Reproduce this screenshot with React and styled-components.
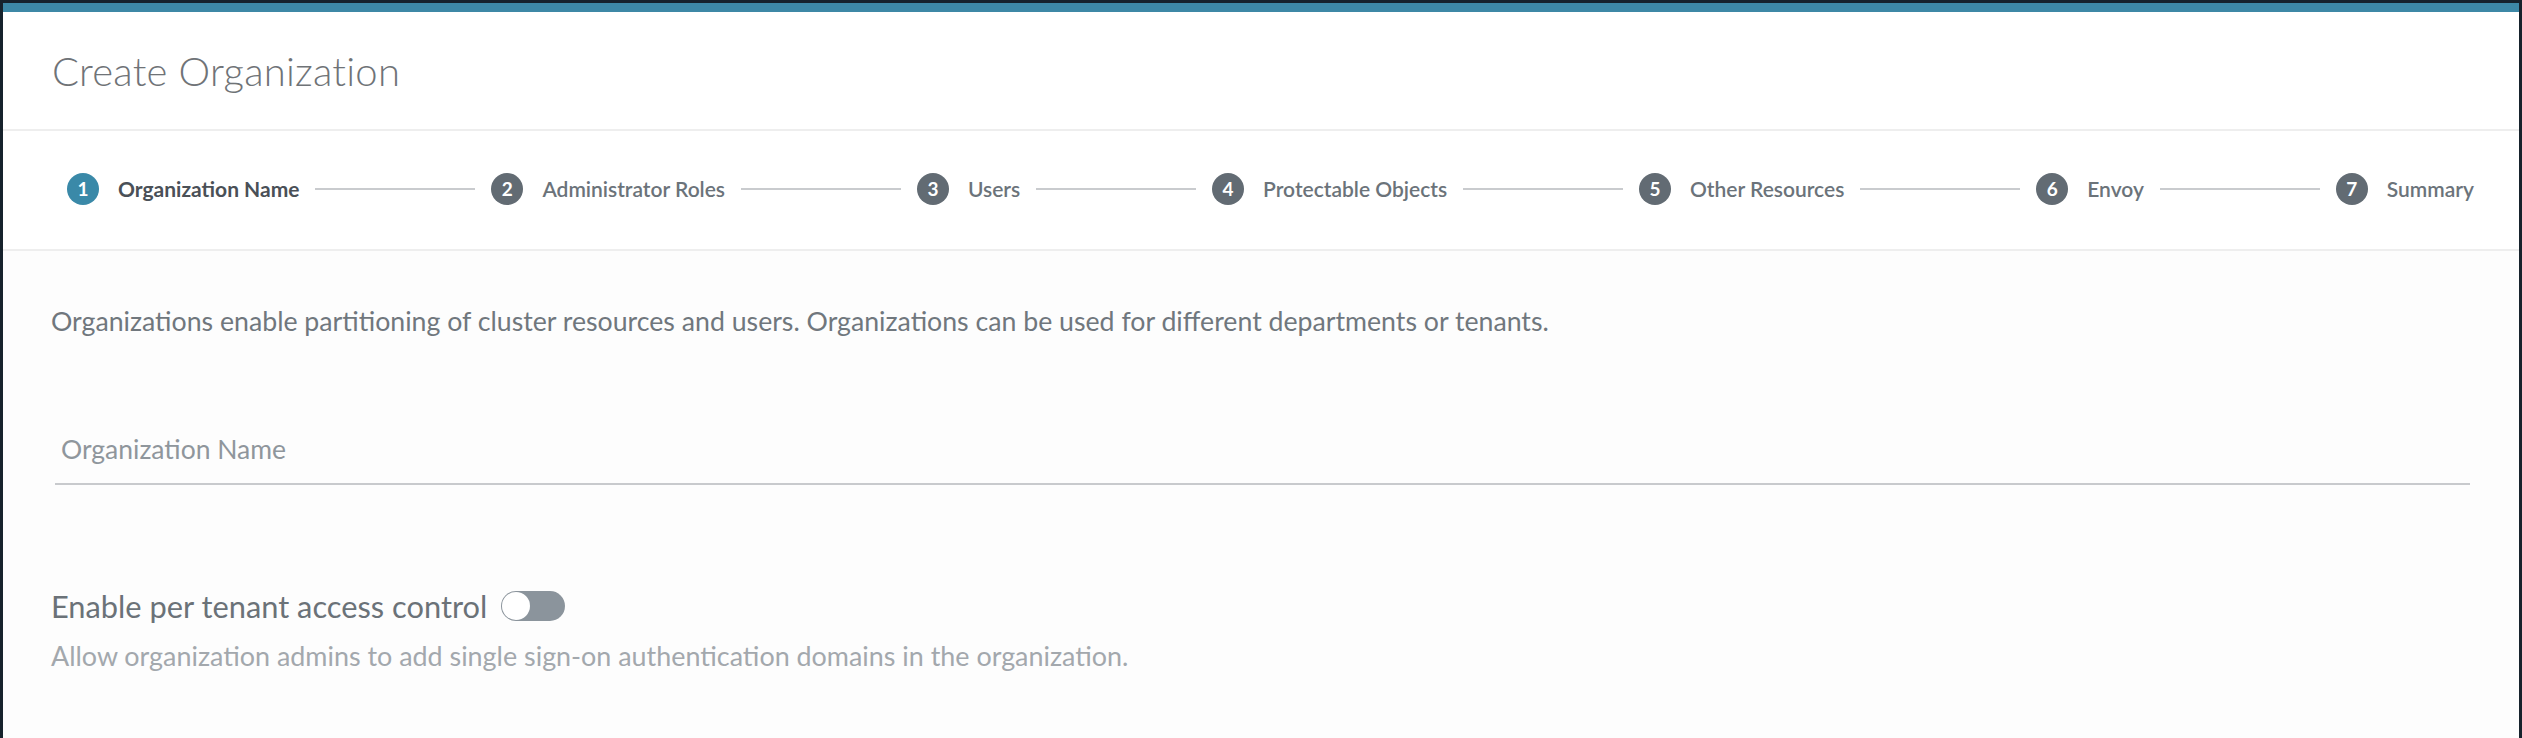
import React, { useState } from "react";
import styled, { createGlobalStyle } from "styled-components";

const GlobalStyle = createGlobalStyle`
  html, body {
    margin: 0;
    padding: 0;
    background: #16222c;
  }
  * {
    box-sizing: border-box;
  }
`;

const Frame = styled.div`
  height: 738px;
  padding: 3px 3px 0 3px;
  display: flex;
  flex-direction: column;
  font-family: Lato, "Open Sans", sans-serif;
`;

const AccentBar = styled.div`
  height: 9px;
  background: #3d88a6;
  flex-shrink: 0;
`;

const Card = styled.div`
  flex: 1;
  background: #fdfdfd;
  display: flex;
  flex-direction: column;
`;

const Header = styled.div`
  height: 119px;
  display: flex;
  align-items: center;
  padding: 0 0 0 49px;
  border-bottom: 2px solid #eeeeee;
  background: #ffffff;
`;

const Title = styled.h1`
  margin: 0;
  font-size: 40px;
  font-weight: 300;
  color: #6f7377;
  letter-spacing: 0.2px;
`;

const Stepper = styled.div`
  height: 120px;
  display: flex;
  align-items: center;
  padding: 0 45px 3px 64px;
  border-bottom: 2px solid #eeeeee;
  background: #ffffff;
`;

const Step = styled.div`
  display: flex;
  align-items: center;
  gap: 19px;
  flex-shrink: 0;
`;

const StepNumber = styled.span`
  width: 32px;
  height: 32px;
  border-radius: 50%;
  display: flex;
  align-items: center;
  justify-content: center;
  background: ${(p) => (p.$active ? "#3a89a8" : "#626b73")};
  color: #ffffff;
  font-size: 19px;
  font-weight: 700;
`;

const StepLabel = styled.span`
  font-size: 21px;
  font-weight: ${(p) => (p.$active ? 700 : 600)};
  color: ${(p) => (p.$active ? "#4a5057" : "#6b737a")};
  white-space: nowrap;
`;

const Connector = styled.div`
  flex: 1;
  height: 2px;
  margin: 0 16px;
  background: #c9cbce;
`;

const Body = styled.div`
  padding: 54px 49px 0 48px;
`;

const Description = styled.p`
  margin: 0;
  font-size: 26.7px;
  line-height: 32px;
  color: #70777d;
`;

const Field = styled.div`
  margin: 95px 0 0 4px;
  border-bottom: 2px solid #c8cacd;
`;

const TextInput = styled.input`
  display: block;
  width: 100%;
  border: none;
  outline: none;
  background: transparent;
  font-family: inherit;
  font-size: 26.5px;
  line-height: 34px;
  height: 34px;
  padding: 0 0 0 6px;
  margin-bottom: 17px;
  color: #4a5057;

  &::placeholder {
    color: #8f969c;
  }
`;

const ToggleRow = styled.label`
  margin-top: 105px;
  display: flex;
  align-items: center;
  gap: 14px;
  height: 32px;
  cursor: pointer;
`;

const ToggleText = styled.span`
  font-size: 30.8px;
  color: #6b7278;
`;

const Track = styled.span`
  width: 64px;
  height: 30px;
  border-radius: 15px;
  padding: 1px;
  display: flex;
  justify-content: ${(p) => (p.$on ? "flex-end" : "flex-start")};
  background: ${(p) => (p.$on ? "#3a89a8" : "#8b949c")};
`;

const Knob = styled.span`
  width: 28px;
  height: 28px;
  border-radius: 50%;
  background: #ffffff;
`;

const Helper = styled.p`
  margin: 20px 0 0 0;
  font-size: 26.9px;
  line-height: 28px;
  color: #a3a8ad;
`;

const steps = [
  "Organization Name",
  "Administrator Roles",
  "Users",
  "Protectable Objects",
  "Other Resources",
  "Envoy",
  "Summary",
];

export default function App() {
  const [name, setName] = useState("");
  const [tenantAccess, setTenantAccess] = useState(false);
  const current = 0;

  return (
    <>
      <GlobalStyle />
      <Frame>
        <AccentBar />
        <Card>
          <Header>
            <Title>Create Organization</Title>
          </Header>
          <Stepper>
            {steps.map((label, i) => (
              <React.Fragment key={label}>
                {i > 0 && <Connector />}
                <Step>
                  <StepNumber $active={i === current}>{i + 1}</StepNumber>
                  <StepLabel $active={i === current}>{label}</StepLabel>
                </Step>
              </React.Fragment>
            ))}
          </Stepper>
          <Body>
            <Description>
              Organizations enable partitioning of cluster resources and users.
              Organizations can be used for different departments or tenants.
            </Description>
            <Field>
              <TextInput
                value={name}
                onChange={(e) => setName(e.target.value)}
                placeholder="Organization Name"
              />
            </Field>
            <ToggleRow onClick={() => setTenantAccess(!tenantAccess)}>
              <ToggleText>Enable per tenant access control</ToggleText>
              <Track $on={tenantAccess}>
                <Knob />
              </Track>
            </ToggleRow>
            <Helper>
              Allow organization admins to add single sign-on authentication
              domains in the organization.
            </Helper>
          </Body>
        </Card>
      </Frame>
    </>
  );
}
